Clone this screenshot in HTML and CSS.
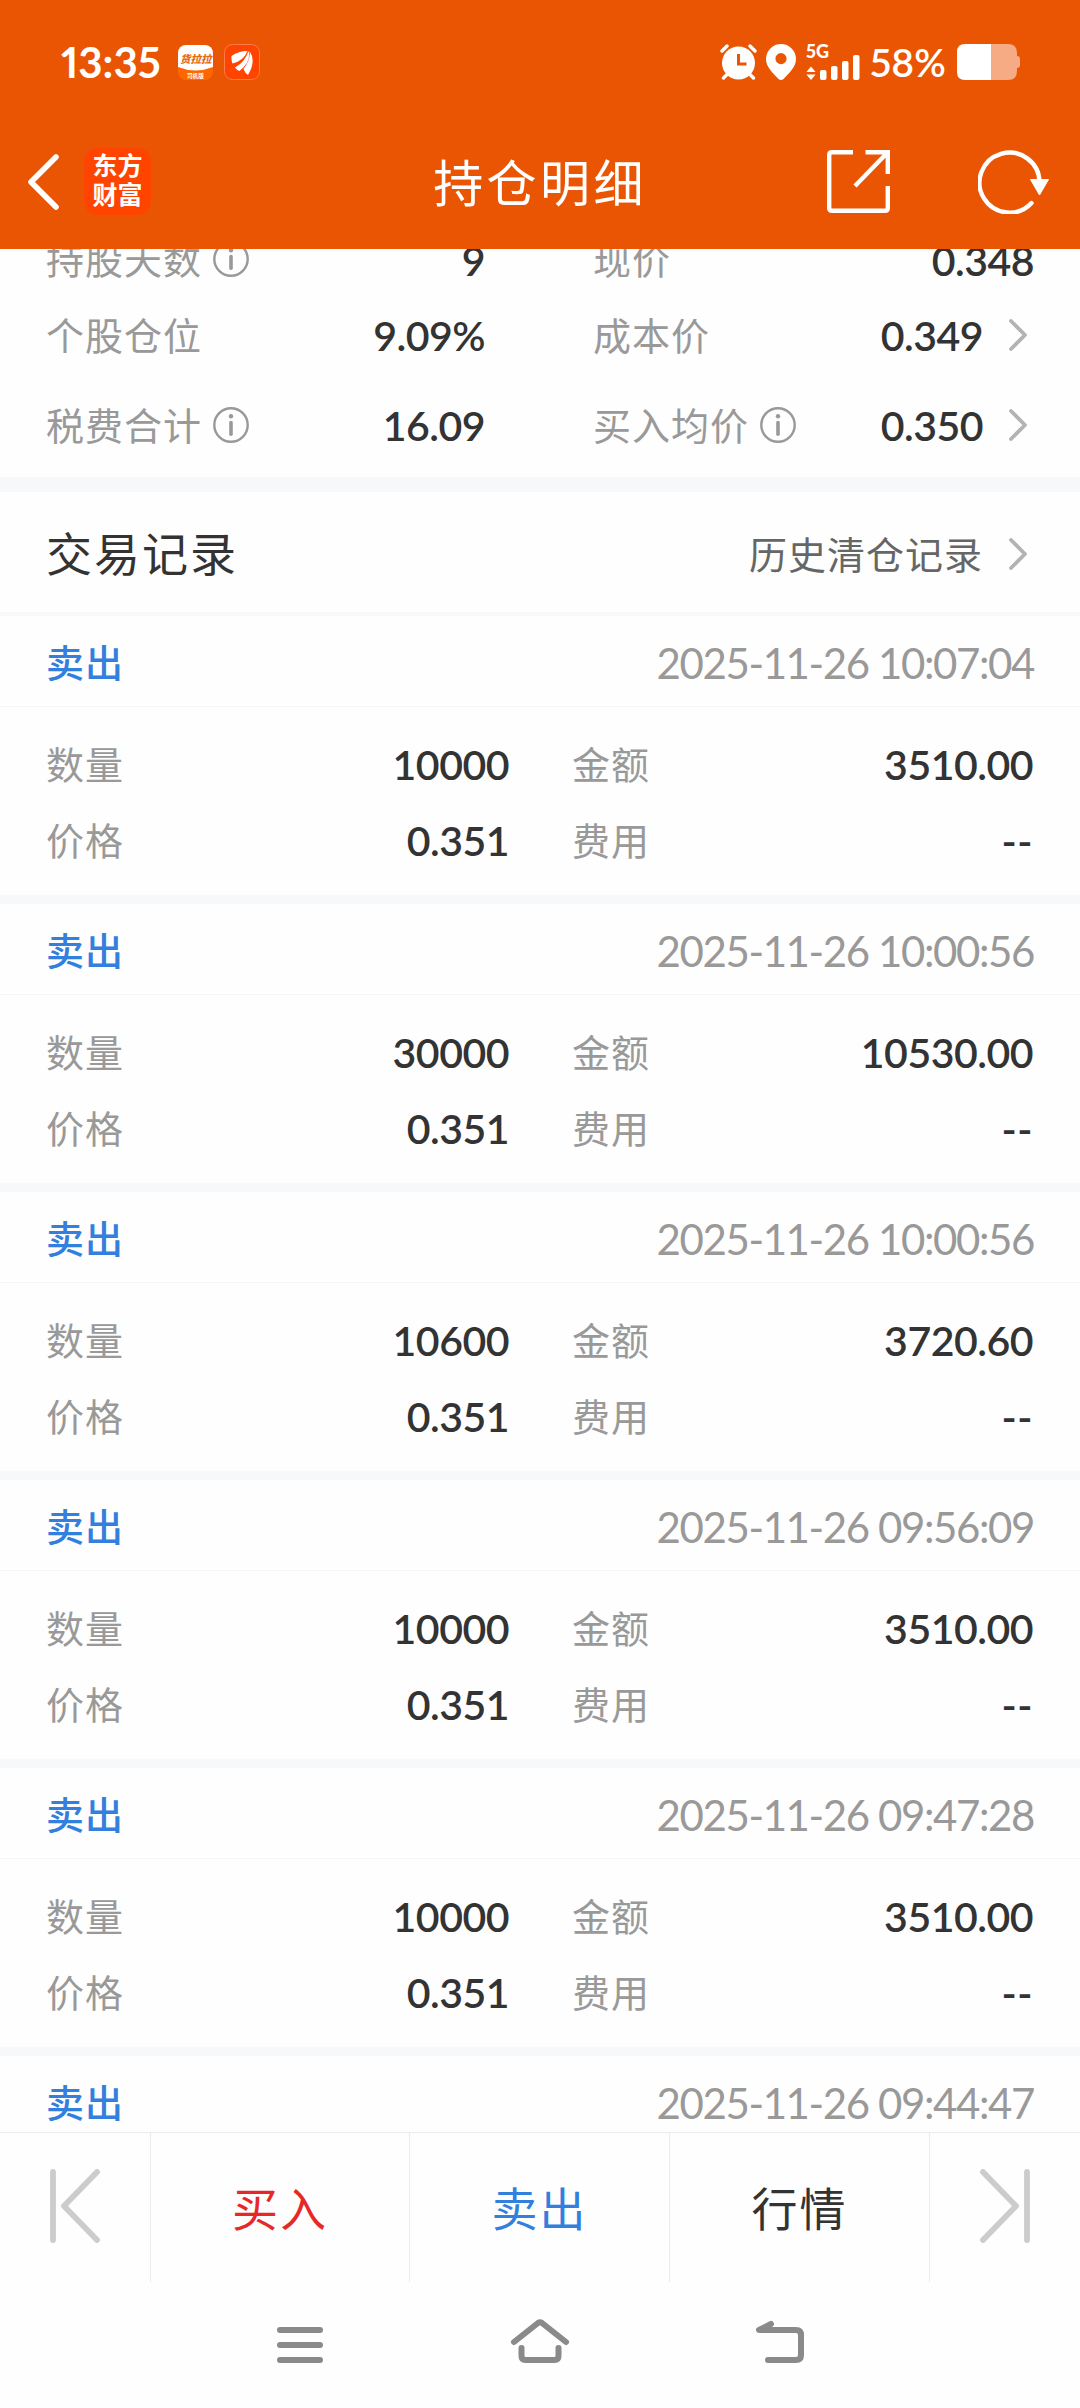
FILE: index.html
```
<!DOCTYPE html>
<html lang="zh-CN">
<head>
    <meta charset="UTF-8">
    <meta name="viewport" content="width=device-width, initial-scale=1.0">
    <title>持仓明细</title>
    <link rel="stylesheet" href="styles.css">
</head>
<body>
    <svg class="defs" width="0" height="0">
        <symbol id="icon-info" viewBox="0 0 36 36">
            <circle cx="18" cy="18" r="16.7" fill="none" stroke="currentColor" stroke-width="2.4"/>
            <circle cx="18" cy="9.2" r="2.2" fill="currentColor"/>
            <path d="M18 15.5v11.8" fill="none" stroke="currentColor" stroke-width="3.6" stroke-linecap="round"/>
        </symbol>
        <symbol id="icon-more" viewBox="0 0 18 32">
            <path d="M2 2l14 14L2 30" fill="none" stroke="currentColor" stroke-width="3.8" stroke-linecap="round" stroke-linejoin="round"/>
        </symbol>
    </svg>

    <div class="app">
        <header class="header">
            <div class="status-bar">
                <span class="clock">13:35</span>
                <svg class="app-icon" width="35" height="35" viewBox="0 0 35 35">
                    <rect width="35" height="35" rx="8" fill="#f60"/>
                    <path d="M0 22V8a8 8 0 0 1 8-8h19a8 8 0 0 1 8 8v14q-17.500 7-35 0z" fill="#fff"/>
                    <text x="2" y="17.5" class="icon-text-main">货拉拉</text>
                    <text x="9" y="32.5" class="icon-text-sub">司机版</text>
                </svg>
                <svg class="app-icon" width="36" height="36" viewBox="0 0 36 36">
                    <rect x=".5" y=".5" width="35" height="35" rx="8" fill="#ff4400" stroke="#ff7a4d"/>
                    <path d="M7.500 12q7-5 16-5-4 10-15 12.500-1.500-4-1-7.500zM11 23.500Q21 18 24.500 7q3 11-9 20-3-1-4.500-3.500zM19.500 25Q27 15 25.500 7q7 10-1.500 24-3-2-4.500-6z" fill="#fff"/>
                </svg>
                <div class="status-right">
                    <svg width="37" height="36" viewBox="0 0 37 36">
                        <g stroke="#fff" stroke-width="3.400" stroke-linecap="round">
                            <path d="M2 7l5-5M35 7l-5-5M7.500 30l-4 4M29.500 30l4 4"/>
                        </g>
                        <circle cx="18.500" cy="19" r="16.500" fill="#fff"/>
                        <path d="M18.500 10v10h8" fill="none" stroke="#ea5504" stroke-width="3"/>
                    </svg>
                    <svg class="pin" width="30" height="36" viewBox="0 0 30 36">
                        <path fill-rule="evenodd" fill="#fff" d="M15 0a15 15 0 0 1 15 15c0 8-7 14-12.500 20q-2.500 2-5 0C7 29 0 23 0 15A15 15 0 0 1 15 0zm0 9a5.600 5.600 0 1 0 0 11.200A5.600 5.600 0 0 0 15 9z"/>
                    </svg>
                    <svg class="signal" width="55" height="36" viewBox="0 0 55 36">
                        <text x="0" y="14" class="net">5G</text>
                        <path d="M5 22.500l4.600 5.500H.4zM5 36l4.600-5.500H.4z" fill="#fff"/>
                        <g fill="#fff">
                            <rect x="14" y="26" width="6.500" height="10" rx="2"/>
                            <rect x="25" y="22" width="6.500" height="14" rx="2"/>
                            <rect x="36" y="17" width="6.500" height="19" rx="2"/>
                            <rect x="47" y="11" width="6.500" height="25" rx="2"/>
                        </g>
                    </svg>
                    <span class="percent">58%</span>
                    <svg class="battery" width="63" height="36" viewBox="0 0 63 36">
                        <path d="M34 0h17q9 0 9 9v3q3 0 3 3v6q0 3-3 3v3q0 9-9 9H34z" fill="#f7ab85"/>
                        <path d="M8 0h26v36H8q-8 0-8-8V8q0-8 8-8z" fill="#fff"/>
                    </svg>
                </div>
            </div>
            <div class="title-bar">
                <div class="title-left">
                    <svg width="32" height="56" viewBox="0 0 32 56">
                        <path d="M29 3L4 28l25 25" fill="none" stroke="#fff" stroke-width="5.600" stroke-linecap="round" stroke-linejoin="round"/>
                    </svg>
                    <div class="brand"><span>东方</span><span>财富</span></div>
                </div>
                <h1>持仓明细</h1>
                <div class="title-right">
                    <svg width="64" height="64" viewBox="0 0 64 64" fill="none" stroke="#fff" stroke-width="4.400">
                        <path d="M26 2.200H5q-2.800 0-2.800 2.800v53q0 2.800 2.800 2.800h53q2.800 0 2.800-2.800V36"/>
                        <path d="M38.500 2.200h22.300V24M60.500 2.500L28 36"/>
                    </svg>
                    <svg width="72" height="64" viewBox="0 0 72 64">
                        <path d="M53.500 53A30 30 0 1 1 61.500 32" fill="none" stroke="#fff" stroke-width="4.400" stroke-linecap="round"/>
                        <path d="M52.500 29.500h18L61.500 45z" fill="#fff" stroke="#fff" stroke-linejoin="round"/>
                    </svg>
                </div>
            </div>
        </header>

        <main class="content">
            <section class="summary">
                <div class="row first">
                    <span class="label">持股天数<svg class="info"><use href="#icon-info"/></svg></span>
                    <span class="value">9</span>
                    <span class="label">现价</span>
                    <span class="value">0.348</span>
                </div>
                <div class="row">
                    <span class="label">个股仓位</span>
                    <span class="value">9.09%</span>
                    <span class="label">成本价</span>
                    <span class="value">0.349<svg class="more"><use href="#icon-more"/></svg></span>
                </div>
                <div class="row">
                    <span class="label">税费合计<svg class="info"><use href="#icon-info"/></svg></span>
                    <span class="value">16.09</span>
                    <span class="label">买入均价<svg class="info"><use href="#icon-info"/></svg></span>
                    <span class="value">0.350<svg class="more"><use href="#icon-more"/></svg></span>
                </div>
            </section>

            <div class="section-head">
                <h2>交易记录</h2>
                <span class="history">历史清仓记录<svg class="more"><use href="#icon-more"/></svg></span>
            </div>

            <div class="record">
                <div class="record-head"><span class="side">卖出</span><span class="time">2025-11-26 10:07:04</span></div>
                <div class="record-body">
                    <span class="label">数量</span><span class="value">10000</span>
                    <span class="label">金额</span><span class="value">3510.00</span>
                    <span class="label">价格</span><span class="value">0.351</span>
                    <span class="label">费用</span><span class="value none">--</span>
                </div>
            </div>
            <div class="record">
                <div class="record-head"><span class="side">卖出</span><span class="time">2025-11-26 10:00:56</span></div>
                <div class="record-body">
                    <span class="label">数量</span><span class="value">30000</span>
                    <span class="label">金额</span><span class="value">10530.00</span>
                    <span class="label">价格</span><span class="value">0.351</span>
                    <span class="label">费用</span><span class="value none">--</span>
                </div>
            </div>
            <div class="record">
                <div class="record-head"><span class="side">卖出</span><span class="time">2025-11-26 10:00:56</span></div>
                <div class="record-body">
                    <span class="label">数量</span><span class="value">10600</span>
                    <span class="label">金额</span><span class="value">3720.60</span>
                    <span class="label">价格</span><span class="value">0.351</span>
                    <span class="label">费用</span><span class="value none">--</span>
                </div>
            </div>
            <div class="record">
                <div class="record-head"><span class="side">卖出</span><span class="time">2025-11-26 09:56:09</span></div>
                <div class="record-body">
                    <span class="label">数量</span><span class="value">10000</span>
                    <span class="label">金额</span><span class="value">3510.00</span>
                    <span class="label">价格</span><span class="value">0.351</span>
                    <span class="label">费用</span><span class="value none">--</span>
                </div>
            </div>
            <div class="record">
                <div class="record-head"><span class="side">卖出</span><span class="time">2025-11-26 09:47:28</span></div>
                <div class="record-body">
                    <span class="label">数量</span><span class="value">10000</span>
                    <span class="label">金额</span><span class="value">3510.00</span>
                    <span class="label">价格</span><span class="value">0.351</span>
                    <span class="label">费用</span><span class="value none">--</span>
                </div>
            </div>
            <div class="record">
                <div class="record-head"><span class="side">卖出</span><span class="time">2025-11-26 09:44:47</span></div>
            </div>
        </main>

        <nav class="actions">
            <div class="action">
                <svg width="50" height="74" viewBox="0 0 50 74" fill="none" stroke="#ccc" stroke-width="5.800" stroke-linecap="round" stroke-linejoin="round">
                    <path d="M3 3v68M47 3L14 37l33 34"/>
                </svg>
            </div>
            <div class="action buy">买入</div>
            <div class="action sell">卖出</div>
            <div class="action">行情</div>
            <div class="action">
                <svg width="50" height="74" viewBox="0 0 50 74" fill="none" stroke="#ccc" stroke-width="5.800" stroke-linecap="round" stroke-linejoin="round">
                    <path d="M47 3v68M3 3l33 34L3 71"/>
                </svg>
            </div>
        </nav>

        <div class="system-nav">
            <svg width="60" height="46" viewBox="0 0 60 46">
                <path d="M10 12h40M10 27h40M10 42h40"/>
            </svg>
            <svg width="60" height="46" viewBox="0 0 60 46">
                <path d="M4 24L28 5q2-1.500 4 0l24 19M11.500 30v8q0 4 4 4h29q4 0 4-4v-8"/>
            </svg>
            <svg width="60" height="46" viewBox="0 0 60 46">
                <path d="M21 6L9 12h37q5 0 5 5v20q0 5-5 5H18"/>
            </svg>
        </div>
    </div>
</body>
</html>
```
FILE: styles.css
```
* {
    margin: 0;
    padding: 0;
    box-sizing: border-box;
}

body {
    font-family: Lato, "Noto Sans CJK SC", sans-serif;
    color: #333;
    background: #fefefe;
}

svg {
    display: block;
    flex-shrink: 0;
}

.defs {
    position: absolute;
}

.app {
    display: flex;
    flex-direction: column;
    width: 1080px;
    height: 2408px;
    overflow: hidden;
}

/* Header */
.header {
    height: 249px;
    flex-shrink: 0;
    background: #ea5504;
    color: #fff;
}

.status-bar {
    display: flex;
    align-items: center;
    height: 124px;
    padding: 0 60px 0 61px;
    font-variant-numeric: proportional-nums;
}

.clock {
    width: 117px;
    font-size: 42px;
    font-weight: 700;
    line-height: 50px;
}

.app-icon {
    margin-right: 11px;
}

.icon-text-main {
    font-size: 10.5px;
    font-weight: 900;
    font-style: italic;
    fill: #ea6a10;
}

.icon-text-sub {
    font-size: 5.6px;
    font-weight: 700;
    fill: #fff;
}

.status-right {
    display: flex;
    align-items: center;
    margin-left: auto;
}

.pin {
    margin-left: 9px;
}

.signal {
    margin-left: 10px;
}

.net {
    font-size: 18px;
    font-weight: 900;
    fill: #fff;
}

.percent {
    width: 96px;
    padding-left: 9px;
    font-size: 39px;
    font-weight: 600;
    line-height: 50px;
}

.title-bar {
    display: grid;
    grid-template-columns: 1fr auto 1fr;
    align-items: center;
    height: 115px;
    padding: 0 30px 0 27px;
}

.title-left,
.title-right {
    display: flex;
    align-items: center;
}

.title-left {
    gap: 25px;
}

.title-right {
    justify-content: flex-end;
    gap: 87px;
}

.brand {
    display: flex;
    flex-direction: column;
    align-items: center;
    justify-content: center;
    width: 67px;
    height: 67px;
    padding-bottom: 3px;
    border-radius: 14px;
    background: #ff4400;
    font-size: 25px;
    font-weight: 700;
    line-height: 29px;
}

.title-bar h1 {
    padding: 3px 0 0 3px;
    font-size: 50px;
    font-weight: 400;
    line-height: 60px;
    letter-spacing: 3.4px;
}

/* Position summary */
.content {
    height: 1883px;
    flex-shrink: 0;
    overflow: hidden;
}

.summary {
    display: flow-root;
    height: 243px;
    border-bottom: 15px solid #f6f8fa;
}

.row {
    display: grid;
    grid-template-columns: 250px 189px 358px 191px;
    align-items: center;
    height: 90px;
    padding: 0 46px;
}

/* first row is scrolled partly under the header */
.row.first {
    height: 61px;
    margin-top: -19px;
}

.row .label:nth-child(3) {
    margin-left: 108px;
}

.label {
    display: flex;
    align-items: center;
    margin-top: -3px;
    color: #999;
    font-size: 38px;
    line-height: 50px;
    letter-spacing: 1px;
    white-space: nowrap;
}

.info {
    width: 36px;
    height: 36px;
    margin-left: 11px;
}

.value {
    display: flex;
    align-items: center;
    justify-content: flex-end;
    font-size: 41px;
    font-weight: 600;
    line-height: 50px;
    letter-spacing: -0.5px;
}

.more {
    width: 18px;
    height: 32px;
    margin: 0 7px 0 26px;
    color: #b3b3b3;
}

.value .more {
    margin-top: -2px;
}

/* Records */
.section-head {
    display: flex;
    align-items: center;
    justify-content: space-between;
    height: 124px;
    padding: 0 46px;
    border-bottom: 4px solid #f6f8fa;
}

.section-head h2 {
    margin-top: -2px;
    font-size: 46px;
    font-weight: 400;
    letter-spacing: 2px;
}

.history {
    display: flex;
    align-items: center;
    color: #666;
    font-size: 38px;
    letter-spacing: 1px;
}

.history .more {
    margin-top: 3px;
}

.record {
    height: 288px;
    border-bottom: 9px solid #f6f8fa;
}

.record-head {
    display: flex;
    align-items: center;
    justify-content: space-between;
    height: 91px;
    padding: 0 46px;
    border-bottom: 1px solid #f3f5f7;
}

.side {
    margin-top: -2px;
    color: #337fdd;
    font-size: 38px;
    font-weight: 500;
    letter-spacing: 1px;
}

.time {
    padding-top: 3px;
    color: #999;
    font-size: 42px;
    letter-spacing: -1.4px;
}

.record-body {
    display: grid;
    grid-template-columns: 200px 263px 200px 324px;
    grid-auto-rows: 76px;
    align-items: center;
    padding: 20px 46px 0;
}

.record-body .label:nth-child(4n + 3) {
    padding-left: 63px;
}

.value.none {
    letter-spacing: 0.5px;
}

/* Bottom bar */
.actions {
    display: grid;
    grid-template-columns: 151px 259px 260px 260px 150px;
    height: 150px;
    flex-shrink: 0;
    border-top: 1px solid #ececec;
}

.action {
    display: flex;
    align-items: center;
    justify-content: center;
    padding-bottom: 3px;
    border-right: 1px solid #ececec;
    font-size: 46px;
    letter-spacing: 2px;
}

.action:last-child {
    border-right: none;
}

.buy {
    color: #e62829;
}

.sell {
    color: #337fdd;
}

.system-nav {
    display: flex;
    justify-content: center;
    gap: 180px;
    padding-top: 36px;
    fill: none;
    stroke: #8a8a8a;
    stroke-width: 6;
    stroke-linecap: round;
    stroke-linejoin: round;
}
```
